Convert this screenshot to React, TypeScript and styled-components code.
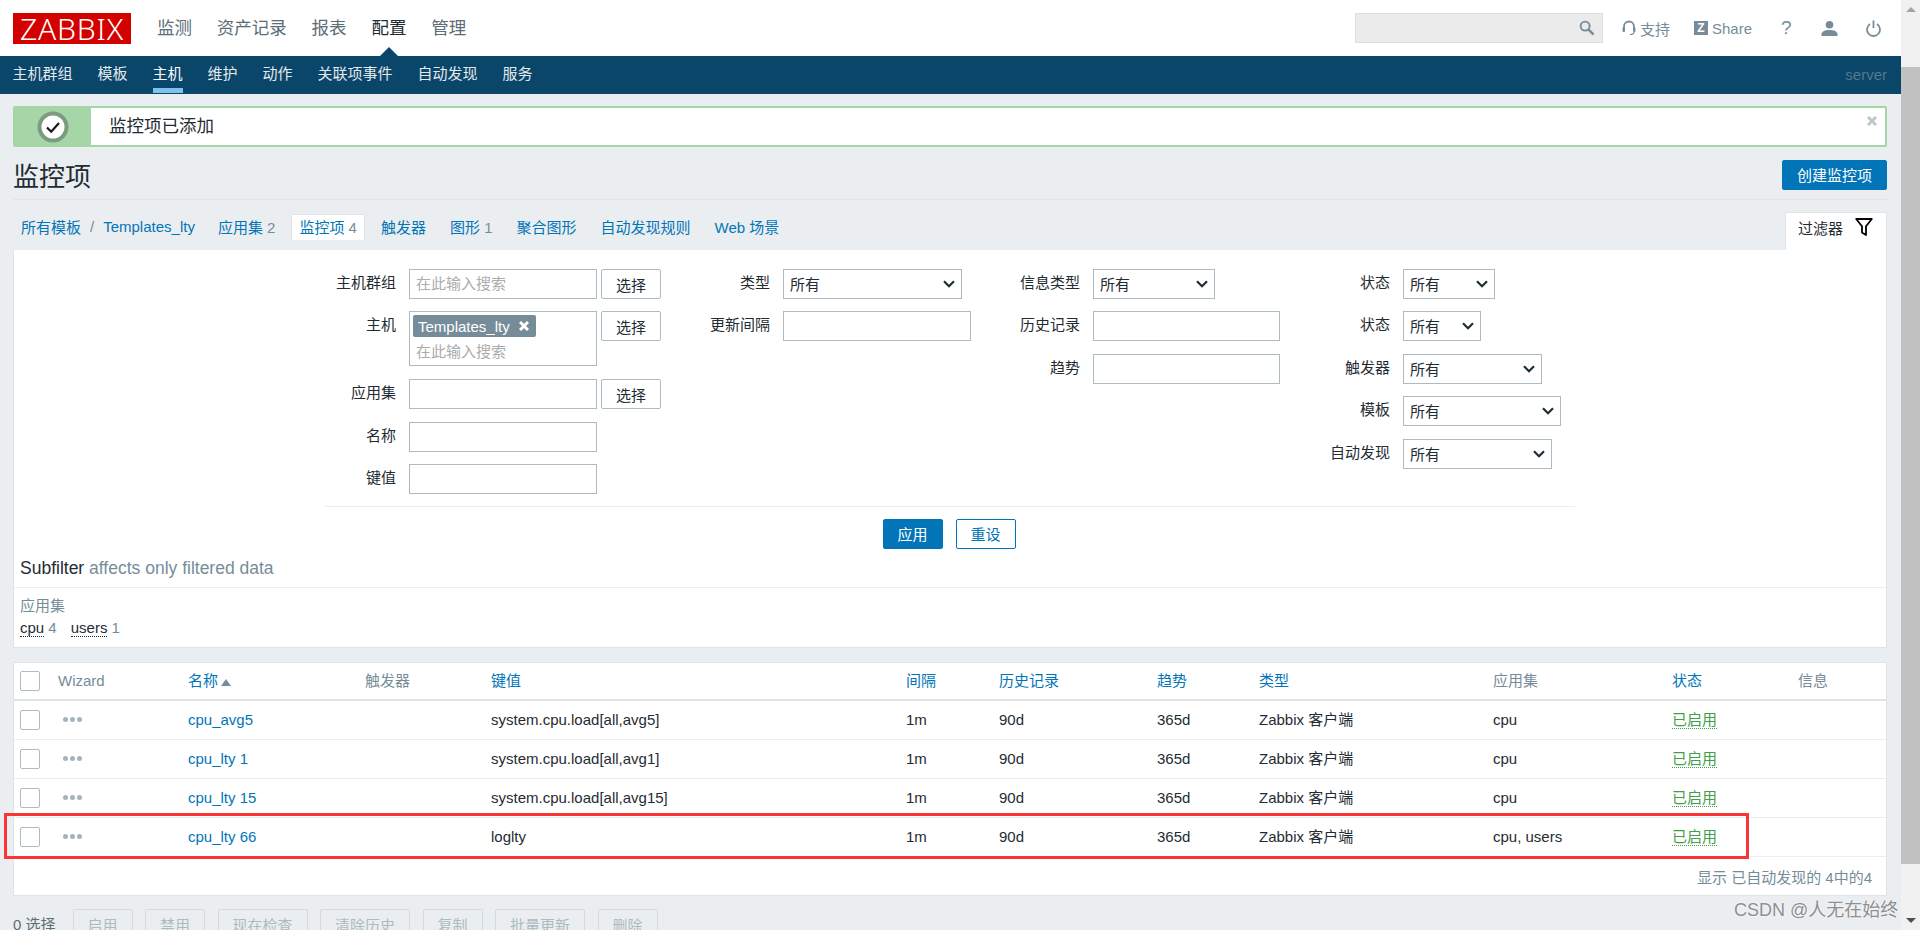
import React from 'react';
import styled, { createGlobalStyle } from 'styled-components';

const FONT = `"Liberation Sans", Arial, "Noto Sans CJK SC", sans-serif`;

const GlobalStyle = createGlobalStyle`
  * { box-sizing: border-box; }
  html, body { margin: 0; padding: 0; height: 930px; overflow: hidden; }
  body { font-family: ${FONT}; font-size: 15px; color: #1f2c33; background: #ebeef0; }
`;

const Page = styled.div`
  display: flex;
  width: 1920px;
  height: 930px;
  overflow: hidden;
  position: relative;
`;

const Main = styled.div`
  width: 1901px;
  height: 930px;
  overflow: hidden;
  background: #ebeef0;
  flex-shrink: 0;
`;

const Scrollbar = styled.div`
  width: 19px;
  height: 930px;
  background: #f1f1f1;
  display: flex;
  flex-direction: column;
  align-items: center;
  justify-content: space-between;
`;

const ScrollThumb = styled.div`
  width: 19px;
  height: 797px;
  background: #c1c1c1;
`;

const ScrollArrow = styled.div<{ $down?: boolean }>`
  width: 0;
  height: 0;
  margin: 7px 0;
  border-left: 5px solid transparent;
  border-right: 5px solid transparent;
  ${p => (p.$down ? 'border-top: 5px solid #505050;' : 'border-bottom: 5px solid #a3a3a3;')}
`;

const Header = styled.header`
  height: 56px;
  background: #fff;
  display: flex;
  align-items: center;
  padding: 0 7px 0 13px;
`;

const Logo = styled.div`
  width: 118px;
  height: 31px;
  background: #d40000;
  color: #fff;
  font-family: "Noto Sans", ${FONT};
  font-weight: 300;
  font-size: 30px;
  line-height: 31px;
  letter-spacing: 0.8px;
  text-align: center;
`;

const MainNav = styled.nav`
  display: flex;
  gap: 24.8px;
  margin-left: 26px;
  font-size: 17.5px;
  line-height: 26px;
  color: #5d6d75;
`;

const MainNavItem = styled.span<{ $active?: boolean }>`
  position: relative;
  color: ${p => (p.$active ? '#1f2c33' : '#5d6d75')};
  ${p =>
    p.$active &&
    `&::after {
      content: '';
      position: absolute;
      left: 9px;
      bottom: -15px;
      border-left: 9px solid transparent;
      border-right: 9px solid transparent;
      border-bottom: 9px solid #0a466a;
    }`}
`;

const HeaderTools = styled.div`
  margin-left: auto;
  display: flex;
  align-items: center;
  color: #768d99;
  font-size: 15px;
`;

const SearchBox = styled.div`
  width: 248px;
  height: 30px;
  background: #ebebeb;
  border: 1px solid #dfdfdf;
  display: flex;
  align-items: center;
  justify-content: flex-end;
  padding-right: 7px;
  margin-right: 19px;
`;

const ToolLink = styled.span<{ $w: number }>`
  display: flex;
  align-items: center;
  gap: 4px;
  width: ${p => p.$w}px;
  color: #768d99;
`;

const ZBadge = styled.span`
  width: 14px;
  height: 14px;
  background: #768d99;
  color: #fff;
  font-size: 12px;
  font-weight: 700;
  line-height: 14px;
  text-align: center;
`;

const HelpMark = styled.span`
  font-size: 19px;
  line-height: 20px;
`;

const SubNav = styled.nav`
  height: 38px;
  background: #0a466a;
  display: flex;
  align-items: flex-start;
  padding: 0 14px 0 12.5px;
  gap: 25px;
  color: #e3e9ec;
`;

const SubNavItem = styled.span<{ $active?: boolean }>`
  height: 37px;
  padding-top: 1px;
  line-height: 34px;
  color: ${p => (p.$active ? '#fff' : '#e3e9ec')};
  ${p => p.$active && 'border-bottom: 5px solid #7cc3f0;'}
`;

const ServerName = styled.span`
  margin-left: auto;
  line-height: 38px;
  color: #54788c;
`;

const Content = styled.main`
  padding: 12px 14px 0 13px;
`;

const Message = styled.div`
  height: 41px;
  border: 2px solid #a6d5a8;
  border-radius: 2px;
  background: #fff;
  display: flex;
  align-items: center;
  font-size: 17.5px;
  position: relative;
`;

const MessageIcon = styled.div`
  width: 76px;
  height: 100%;
  background: #a6d5a8;
  display: flex;
  align-items: center;
  justify-content: center;
  margin-right: 18px;
`;

const MessageText = styled.span`
  margin-top: -4px;
`;

const MessageClose = styled.span`
  position: absolute;
  right: 8px;
  top: 8px;
  display: flex;
`;

const TitleRow = styled.div`
  height: 53px;
  padding-top: 13px;
  border-bottom: 1px solid #dfe4e7;
  display: flex;
  justify-content: space-between;
  align-items: flex-start;
`;

const Title = styled.h1`
  margin: 0;
  font-size: 26px;
  font-weight: 400;
  line-height: 34px;
`;

const PrimaryButton = styled.button`
  height: 30px;
  padding: 0 0 2px;
  width: ${(p: { $w?: number }) => p.$w ?? 60}px;
  background: #0275b8;
  color: #fff;
  border: 1px solid #0275b8;
  border-radius: 2px;
  font: 15px ${FONT};
`;

const TabRow = styled.div`
  height: 50px;
  display: flex;
  justify-content: space-between;
  align-items: flex-end;
`;

const Breadcrumbs = styled.div`
  display: flex;
  align-items: center;
  height: 50px;
  padding: 3px 0 0 8px;
  color: #0275b8;
`;

const NavLink = styled.span<{ $ml?: number; $current?: boolean }>`
  margin-left: ${p => p.$ml ?? 0}px;
  ${p =>
    p.$current &&
    `background: #fff;
     border: 1px solid #dfe4e7;
     border-bottom: 0;
     height: 26px;
     line-height: 25px;
     padding: 0 7px;
     border-radius: 2px 2px 0 0;`}
`;

const Count = styled.span`
  color: #768d99;
`;

const Slash = styled.span`
  color: #768d99;
  margin: 0 9px;
`;

const FilterTab = styled.div`
  width: 102px;
  height: 38px;
  background: #fff;
  border: 1px solid #dfe4e7;
  border-bottom: 0;
  border-radius: 2px 2px 0 0;
  display: flex;
  padding: 7px 0 0 12px;
  gap: 12px;
  line-height: 18px;
`;

const FilterPanel = styled.section`
  height: 398px;
  background: #fff;
  border: 1px solid #dfe4e7;
  border-top: 0;
  margin-right: 0;
`;

const FilterForm = styled.div`
  height: 257px;
  display: flex;
  margin: 0 311px;
  padding: 19px 0 0;
  border-bottom: 1px solid #ebeef0;
`;

const FilterColumn = styled.div<{ $w: number }>`
  width: ${p => p.$w}px;
  display: flex;
  flex-direction: column;
  flex-shrink: 0;
`;

const FormRow = styled.div<{ $gap?: number }>`
  display: flex;
  align-items: flex-start;
  margin-bottom: ${p => p.$gap ?? 12}px;
`;

const FormLabel = styled.label<{ $w: number }>`
  width: ${p => p.$w}px;
  margin-right: 13px;
  text-align: right;
  line-height: 28px;
  flex-shrink: 0;
`;

const TextInput = styled.div<{ $w?: number }>`
  width: ${p => p.$w ?? 188}px;
  height: 30px;
  border: 1px solid #acbbc2;
  padding-left: 6px;
  line-height: 27px;
  color: #acacac;
`;

const MultiBox = styled.div`
  width: 188px;
  height: 55px;
  border: 1px solid #acbbc2;
  padding: 3px 3px 0;
  color: #acacac;
`;

const MultiPlaceholder = styled.div`
  padding-left: 3px;
  margin-top: 1px;
  line-height: 27px;
`;

const Chip = styled.span`
  display: inline-flex;
  align-items: center;
  height: 22px;
  width: 123px;
  padding: 0 5px;
  gap: 9px;
  background: #768d99;
  color: #fff;
  border-radius: 2px;
  font-size: 15px;
`;

const SelectButton = styled.button`
  width: 60px;
  height: 30px;
  margin-left: 4px;
  padding: 0;
  background: #fff;
  border: 1px solid #acbbc2;
  border-radius: 2px;
  color: #1f2c33;
  font: 15px ${FONT};
`;

const SelectBox = styled.div<{ $w: number }>`
  width: ${p => p.$w}px;
  height: 30px;
  border: 1px solid #acbbc2;
  padding: 0 6px 2px;
  display: flex;
  align-items: center;
  justify-content: space-between;
  background: #fff;
`;

const FilterActions = styled.div`
  height: 50px;
  display: flex;
  justify-content: center;
  gap: 13px;
  padding: 12px 0 0 0;
  margin-right: 2px;
`;

const OutlineButton = styled.button`
  width: 60px;
  height: 30px;
  padding: 0 0 2px;
  background: #fff;
  border: 1px solid #0275b8;
  border-radius: 2px;
  color: #0275b8;
  font: 15px ${FONT};
`;

const SubfilterHead = styled.div`
  height: 31px;
  padding-left: 6px;
  font-size: 17.5px;
  line-height: 22px;
  border-bottom: 1px solid #ebeef0;
  margin-top: 0;
`;

const Muted = styled.span`
  color: #768d99;
`;

const SubfilterBody = styled.div`
  padding: 7px 6px 0;
  line-height: 22px;
  color: #768d99;
`;

const SubfilterItems = styled.div`
  display: flex;
  gap: 14px;
  margin-top: 0;
`;

const DottedLink = styled.span<{ $green?: boolean }>`
  color: ${p => (p.$green ? '#429e47' : '#1f2c33')};
  border-bottom: 1px dotted ${p => (p.$green ? '#429e47' : '#1f2c33')};
`;

const TablePanel = styled.section`
  margin-top: 14px;
  background: #fff;
  border: 1px solid #dfe4e7;
  height: 234px;
`;

const COLUMNS = '38px 130px 177px 126px 415px 93px 158px 102px 234px 179px 126px 1fr';

const HeadRow = styled.div`
  display: grid;
  grid-template-columns: ${COLUMNS};
  align-items: center;
  height: 38px;
  padding-left: 6px;
  border-bottom: 2px solid #dfe4e7;
  color: #768d99;
  line-height: 20px;
  > span { margin-top: -1px; }
`;

const BodyRow = styled.div`
  display: grid;
  grid-template-columns: ${COLUMNS};
  align-items: center;
  height: 39px;
  padding-left: 6px;
  border-bottom: 1px solid #ebeef0;
  line-height: 20px;
  > span { margin-top: -1px; }
`;

const HeadLink = styled.span`
  color: #0275b8;
  display: flex;
  align-items: center;
  gap: 3px;
`;

const SortArrow = styled.span`
  width: 0;
  height: 0;
  margin-top: 4px;
  border-left: 5px solid transparent;
  border-right: 5px solid transparent;
  border-bottom: 7px solid #768d99;
`;

const CheckBox = styled.span`
  display: block;
  width: 20px;
  height: 20px;
  background: #fff;
  border: 1px solid #acbbc2;
  border-radius: 2px;
`;

const Dots = styled.span`
  display: flex;
  gap: 2px;
  margin: 3px 0 0 5px;
`;

const Dot = styled.span`
  width: 5px;
  height: 5px;
  border-radius: 50%;
  background: #a3b4bd;
`;

const ItemLink = styled.span`
  color: #0275b8;
`;

const TableFooter = styled.div`
  height: 39px;
  line-height: 41px;
  text-align: right;
  padding-right: 14px;
  color: #768d99;
`;

const ActionBar = styled.div`
  display: flex;
  align-items: flex-start;
  margin-top: 13px;
  gap: 12.5px;
`;

const SelectedCount = styled.span`
  width: 47px;
  line-height: 32px;
  color: #5d6d75;
`;

const DisabledButton = styled.button<{ $w?: number }>`
  width: ${p => p.$w ?? 60}px;
  height: 30px;
  padding: 0;
  background: #ebeef0;
  border: 1px solid #d3dbdf;
  border-radius: 2px;
  color: #acbbc2;
  font: 15px ${FONT};
  flex-shrink: 0;
`;

const RedMark = styled.div`
  position: absolute;
  left: 4px;
  top: 813px;
  width: 1745px;
  height: 46px;
  border: 3px solid #fb3535;
  pointer-events: none;
`;

const Watermark = styled.div`
  position: absolute;
  left: 1734px;
  top: 897px;
  font-size: 18px;
  line-height: 26px;
  white-space: nowrap;
  color: #8f8f8f;
  text-shadow: 0 0 2px #fff;
`;

const SearchIcon = () => (
  <svg width="16" height="16" viewBox="0 0 17 17" fill="none" stroke="#768d99">
    <circle cx="6.5" cy="6.5" r="4.8" strokeWidth="2" />
    <path d="M10 10l5.5 5.5" strokeWidth="2.6" />
  </svg>
);

const HeadsetIcon = () => (
  <svg width="14" height="16" viewBox="0 0 14 16" fill="none" stroke="#768d99">
    <path d="M2 9V6.5a5 5 0 0 1 10 0V9" strokeWidth="1.8" />
    <rect x="0.5" y="7.5" width="2.5" height="4.5" rx="1" fill="#768d99" strokeWidth="0" />
    <rect x="11" y="7.5" width="2.5" height="4.5" rx="1" fill="#768d99" strokeWidth="0" />
    <path d="M12 12c0 1.5-1.5 2.5-4 2.5" strokeWidth="1.2" />
  </svg>
);

const UserIcon = () => (
  <svg width="17" height="17" viewBox="0 0 17 17" fill="#768d99">
    <circle cx="8.5" cy="4.8" r="3.8" />
    <path d="M0.5 16v-1.8C.5 11.5 4 10 8.5 10s8 1.5 8 4.2V16z" />
  </svg>
);

const PowerIcon = () => (
  <svg width="17" height="17" viewBox="0 0 17 17" fill="none" stroke="#768d99" strokeWidth="1.8">
    <path d="M5 4a6.5 6.5 0 1 0 7 0" />
    <path d="M8.5 0.5v7.5" />
  </svg>
);

const CheckBadge = () => (
  <svg width="32" height="32" viewBox="0 0 32 32">
    <circle cx="16" cy="16" r="13.5" fill="#fff" stroke="#7b9c7f" strokeWidth="4" />
    <path d="M10 16.5l4.2 4.2L22 12" fill="none" stroke="#16191a" strokeWidth="2.2" />
  </svg>
);

const CrossIcon = ({ size, color }: { size: number; color: string }) => (
  <svg width={size} height={size} viewBox="0 0 10 10" stroke={color} strokeWidth="3">
    <path d="M1 1l8 8M9 1l-8 8" />
  </svg>
);

const FunnelIcon = () => (
  <svg width="18" height="18" viewBox="0 0 18 18" fill="none" stroke="#000" strokeWidth="1.8" style={{ marginTop: -2 }}>
    <path d="M1.2 1h15.6L11 8.2V17l-4-2.6V8.2z" strokeLinejoin="round" />
  </svg>
);

const Chevron = () => (
  <svg width="12" height="8" viewBox="0 0 12 8" fill="none" stroke="#1f2c33" strokeWidth="2.2" style={{ marginTop: 2 }}>
    <path d="M1 1.2l5 5 5-5" />
  </svg>
);

const Select = ({ w }: { w: number }) => (
  <SelectBox $w={w}>
    所有
    <Chevron />
  </SelectBox>
);

const items = [
  { name: 'cpu_avg5', key: 'system.cpu.load[all,avg5]', apps: 'cpu' },
  { name: 'cpu_lty 1', key: 'system.cpu.load[all,avg1]', apps: 'cpu' },
  { name: 'cpu_lty 15', key: 'system.cpu.load[all,avg15]', apps: 'cpu' },
  { name: 'cpu_lty 66', key: 'loglty', apps: 'cpu, users' },
];

const mainNav = ['监测', '资产记录', '报表', '配置', '管理'];
const subNav = ['主机群组', '模板', '主机', '维护', '动作', '关联项事件', '自动发现', '服务'];

export default function App() {
  return (
    <Page>
      <GlobalStyle />
      <Main>
        <Header>
          <Logo>ZABBIX</Logo>
          <MainNav>
            {mainNav.map(n => (
              <MainNavItem key={n} $active={n === '配置'}>
                {n}
              </MainNavItem>
            ))}
          </MainNav>
          <HeaderTools>
            <SearchBox>
              <SearchIcon />
            </SearchBox>
            <ToolLink $w={72}>
              <HeadsetIcon />
              支持
            </ToolLink>
            <ToolLink $w={87}>
              <ZBadge>Z</ZBadge>
              Share
            </ToolLink>
            <ToolLink $w={40}>
              <HelpMark>?</HelpMark>
            </ToolLink>
            <ToolLink $w={44}>
              <UserIcon />
            </ToolLink>
            <ToolLink $w={29}>
              <PowerIcon />
            </ToolLink>
          </HeaderTools>
        </Header>
        <SubNav>
          {subNav.map(n => (
            <SubNavItem key={n} $active={n === '主机'}>
              {n}
            </SubNavItem>
          ))}
          <ServerName>server</ServerName>
        </SubNav>
        <Content>
          <Message>
            <MessageIcon>
              <CheckBadge />
            </MessageIcon>
            <MessageText>监控项已添加</MessageText>
            <MessageClose>
              <CrossIcon size={10} color="#bcc8ce" />
            </MessageClose>
          </Message>
          <TitleRow>
            <Title>监控项</Title>
            <PrimaryButton $w={105}>创建监控项</PrimaryButton>
          </TitleRow>
          <TabRow>
            <Breadcrumbs>
              <NavLink>所有模板</NavLink>
              <Slash>/</Slash>
              <NavLink>Templates_lty</NavLink>
              <NavLink $ml={23}>
                应用集 <Count>2</Count>
              </NavLink>
              <NavLink $ml={16} $current>
                监控项 <Count>4</Count>
              </NavLink>
              <NavLink $ml={16}>触发器</NavLink>
              <NavLink $ml={24}>
                图形 <Count>1</Count>
              </NavLink>
              <NavLink $ml={24}>聚合图形</NavLink>
              <NavLink $ml={24}>自动发现规则</NavLink>
              <NavLink $ml={24}>Web 场景</NavLink>
            </Breadcrumbs>
            <FilterTab>
              过滤器
              <FunnelIcon />
            </FilterTab>
          </TabRow>
          <FilterPanel>
            <FilterForm>
              <FilterColumn $w={365}>
                <FormRow>
                  <FormLabel $w={71}>主机群组</FormLabel>
                  <TextInput>在此输入搜索</TextInput>
                  <SelectButton>选择</SelectButton>
                </FormRow>
                <FormRow $gap={13}>
                  <FormLabel $w={71}>主机</FormLabel>
                  <MultiBox>
                    <Chip>
                      Templates_lty
                      <CrossIcon size={10} color="#fff" />
                    </Chip>
                    <MultiPlaceholder>在此输入搜索</MultiPlaceholder>
                  </MultiBox>
                  <SelectButton>选择</SelectButton>
                </FormRow>
                <FormRow $gap={13}>
                  <FormLabel $w={71}>应用集</FormLabel>
                  <TextInput />
                  <SelectButton>选择</SelectButton>
                </FormRow>
                <FormRow>
                  <FormLabel $w={71}>名称</FormLabel>
                  <TextInput />
                </FormRow>
                <FormRow>
                  <FormLabel $w={71}>键值</FormLabel>
                  <TextInput />
                </FormRow>
              </FilterColumn>
              <FilterColumn $w={310}>
                <FormRow>
                  <FormLabel $w={80}>类型</FormLabel>
                  <Select w={179} />
                </FormRow>
                <FormRow>
                  <FormLabel $w={80}>更新间隔</FormLabel>
                  <TextInput />
                </FormRow>
              </FilterColumn>
              <FilterColumn $w={290}>
                <FormRow>
                  <FormLabel $w={80}>信息类型</FormLabel>
                  <Select w={122} />
                </FormRow>
                <FormRow $gap={13}>
                  <FormLabel $w={80}>历史记录</FormLabel>
                  <TextInput $w={187} />
                </FormRow>
                <FormRow>
                  <FormLabel $w={80}>趋势</FormLabel>
                  <TextInput $w={187} />
                </FormRow>
              </FilterColumn>
              <FilterColumn $w={283}>
                <FormRow>
                  <FormLabel $w={100}>状态</FormLabel>
                  <Select w={92} />
                </FormRow>
                <FormRow $gap={13}>
                  <FormLabel $w={100}>状态</FormLabel>
                  <Select w={78} />
                </FormRow>
                <FormRow>
                  <FormLabel $w={100}>触发器</FormLabel>
                  <Select w={139} />
                </FormRow>
                <FormRow $gap={13}>
                  <FormLabel $w={100}>模板</FormLabel>
                  <Select w={158} />
                </FormRow>
                <FormRow>
                  <FormLabel $w={100}>自动发现</FormLabel>
                  <Select w={149} />
                </FormRow>
              </FilterColumn>
            </FilterForm>
            <FilterActions>
              <PrimaryButton>应用</PrimaryButton>
              <OutlineButton>重设</OutlineButton>
            </FilterActions>
            <SubfilterHead>
              Subfilter <Muted>affects only filtered data</Muted>
            </SubfilterHead>
            <SubfilterBody>
              应用集
              <SubfilterItems>
                <span>
                  <DottedLink>cpu</DottedLink> 4
                </span>
                <span>
                  <DottedLink>users</DottedLink> 1
                </span>
              </SubfilterItems>
            </SubfilterBody>
          </FilterPanel>
          <TablePanel>
            <HeadRow>
              <CheckBox />
              <span>Wizard</span>
              <HeadLink>
                名称
                <SortArrow />
              </HeadLink>
              <span>触发器</span>
              <HeadLink>键值</HeadLink>
              <HeadLink>间隔</HeadLink>
              <HeadLink>历史记录</HeadLink>
              <HeadLink>趋势</HeadLink>
              <HeadLink>类型</HeadLink>
              <span>应用集</span>
              <HeadLink>状态</HeadLink>
              <span>信息</span>
            </HeadRow>
            {items.map(item => (
              <BodyRow key={item.name}>
                <CheckBox />
                <Dots>
                  <Dot />
                  <Dot />
                  <Dot />
                </Dots>
                <ItemLink>{item.name}</ItemLink>
                <span />
                <span>{item.key}</span>
                <span>1m</span>
                <span>90d</span>
                <span>365d</span>
                <span>Zabbix 客户端</span>
                <span>{item.apps}</span>
                <span>
                  <DottedLink $green>已启用</DottedLink>
                </span>
                <span />
              </BodyRow>
            ))}
            <TableFooter>显示 已自动发现的 4中的4</TableFooter>
          </TablePanel>
          <ActionBar>
            <SelectedCount>0 选择</SelectedCount>
            <DisabledButton>启用</DisabledButton>
            <DisabledButton>禁用</DisabledButton>
            <DisabledButton $w={90}>现在检查</DisabledButton>
            <DisabledButton $w={90}>清除历史</DisabledButton>
            <DisabledButton>复制</DisabledButton>
            <DisabledButton $w={90}>批量更新</DisabledButton>
            <DisabledButton>删除</DisabledButton>
          </ActionBar>
        </Content>
      </Main>
      <Scrollbar>
        <ScrollArrow />
        <ScrollThumb />
        <ScrollArrow $down />
      </Scrollbar>
      <RedMark />
      <Watermark>CSDN @人无在始终</Watermark>
    </Page>
  );
}
